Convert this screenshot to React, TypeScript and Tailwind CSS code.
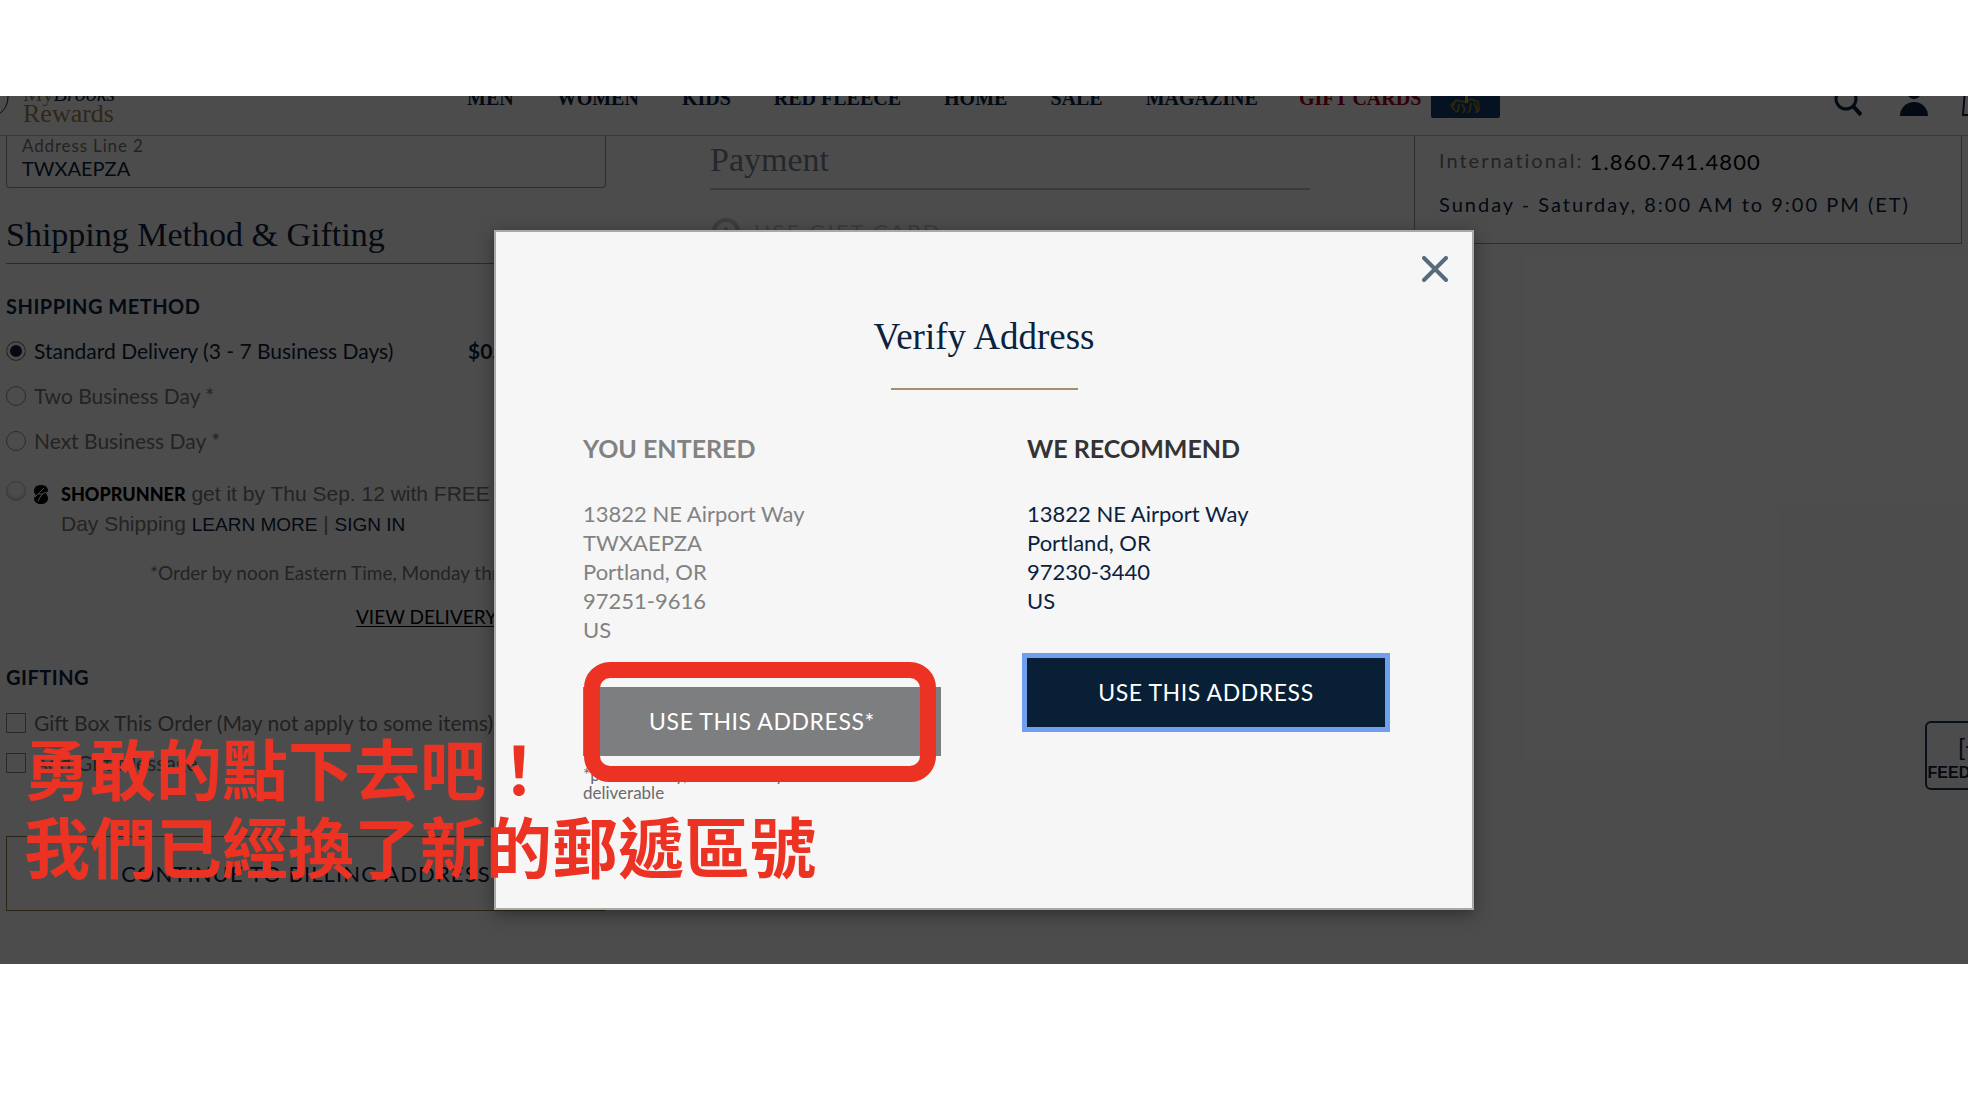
import { FC, ReactNode } from 'react';

const NAV_LINKS = ['MEN', 'WOMEN', 'KIDS', 'RED FLEECE', 'HOME', 'SALE', 'MAGAZINE'];

const Header: FC = () => (
  <header className="flex h-10 items-end justify-between overflow-hidden border-b border-[#c0c0c0] font-['Liberation_Serif',serif]">
    <div className="flex w-[467px] shrink-0 items-end">
      <svg className="h-10 w-[23px]" viewBox="0 0 23 40" fill="none">
        <circle cx="-13" cy="2" r="21" stroke="#0a2240" strokeWidth="1" />
      </svg>
      <a href="#rewards" className="pb-[11px] text-[26px] leading-5 text-[#a08350]">
        <span className="block h-5 text-[22px]">
          My<i className="text-[#0a2240]">Brooks</i>
        </span>
        Rewards
      </a>
    </div>
    <nav className="flex flex-1 items-end gap-[43px] text-xl leading-6 font-bold text-[#0a2240]">
      {NAV_LINKS.map((label) => (
        <a key={label} href="#nav" className="pb-[25px] whitespace-nowrap">
          {label}
        </a>
      ))}
      <a href="#gift-cards" className="-ml-0.5 flex items-end gap-2.5 whitespace-nowrap text-[#a00018]">
        <span className="pb-[25px]">GIFT CARDS</span>
        <svg className="mb-4 h-6 w-[69px]" viewBox="0 0 69 24">
          <path d="M0 0h69v21a2 2 0 0 1-2 2H2a2 2 0 0 1-2-2z" fill="#0f3d6e" />
          <path
            d="M20 11l5-6 9 2 6-3 7 3 1 8-3 3M24 8l-3 4 3 3M28 9l-1 7-3 1M31 9l3 5-2 4M40 8l-1 7-2 3M43 8l3 6-1 4"
            stroke="#8c7a35"
            strokeWidth="2"
            fill="none"
          />
          <path d="M34 0h3v8h-3z" fill="#d8a72b" />
        </svg>
      </a>
    </nav>
    <div className="flex w-[134px] shrink-0 items-end gap-[38px] overflow-hidden pb-[19px]">
      <button aria-label="Search" className="shrink-0">
        <svg className="h-7 w-7" viewBox="0 0 28 28" fill="none" stroke="#0a2240" strokeWidth="3">
          <circle cx="12" cy="11" r="10" />
          <path d="M19 18l8 9" strokeWidth="4" />
        </svg>
      </button>
      <button aria-label="Account" className="shrink-0">
        <svg className="h-7 w-7" viewBox="0 0 28 28" fill="#0a2240">
          <circle cx="14" cy="4" r="7" />
          <path d="M0 28a14 14 0 0 1 28 0z" />
        </svg>
      </button>
      <button aria-label="Shopping bag" className="-ml-1 shrink-0">
        <svg className="h-7 w-6" viewBox="0 0 24 28" fill="none" stroke="#0a2240" strokeWidth="2">
          <path d="M3 2L1 27h22L21 2z" />
        </svg>
      </button>
    </div>
  </header>
);

interface DeliveryOptionProps {
  label: string;
  price?: string;
  checked?: boolean;
}

const DeliveryOption: FC<DeliveryOptionProps> = ({ label, price, checked = false }) => (
  <div className="flex h-[45px] items-center justify-between text-[21px]">
    <label className={`flex items-center gap-2 ${checked ? 'text-[#0a2240]' : 'text-[#777777]'}`}>
      <input
        type="radio"
        name="delivery"
        defaultChecked={checked}
        className="h-5 w-5 appearance-none rounded-full border border-[#909090] bg-transparent checked:border-[#b39b70] checked:bg-[#0a2240] checked:shadow-[inset_0_0_0_3px_#ffffff]"
      />
      {label}
    </label>
    {price && <b className="w-[138px] text-[#0a2240]">{price}</b>}
  </div>
);

const GiftOption: FC<{ label: string }> = ({ label }) => (
  <label className="flex h-10 items-center gap-2 text-[21px] text-[#707070]">
    <input type="checkbox" className="h-5 w-5 appearance-none border border-[#888888]" />
    {label}
  </label>
);

const ShippingColumn: FC = () => (
  <section className="w-[600px] shrink-0">
    <div className="flex h-[52px] flex-col justify-end rounded-b border border-t-0 border-[#999999] px-[15px] pb-[7px]">
      <label htmlFor="address2" className="text-[17px] leading-5 tracking-wider text-[#777777]">
        Address Line 2
      </label>
      <input id="address2" readOnly value="TWXAEPZA" className="h-6 bg-transparent text-xl text-[#0a2240] outline-none" />
    </div>
    <h2 className="mt-[27px] border-b border-[#a98a55] pb-2 font-['Liberation_Serif',serif] text-[34px] leading-10 text-[#0a2240]">
      Shipping Method &amp; Gifting
    </h2>
    <h3 className="mt-[30px] mb-2.5 text-xl leading-6 font-bold tracking-wide text-[#0a2240]">SHIPPING METHOD</h3>
    <DeliveryOption label="Standard Delivery (3 - 7 Business Days)" price="$0.00" checked />
    <DeliveryOption label="Two Business Day *" />
    <DeliveryOption label="Next Business Day *" />
    <div className="mt-4 flex gap-2 font-['Liberation_Sans',sans-serif] text-[21px] leading-[29px] text-[#777777]">
      <input
        type="radio"
        name="delivery"
        aria-label="ShopRunner"
        className="mt-0.5 h-5 w-5 appearance-none rounded-full border border-[#bbbbbb] shadow-[inset_0_-2px_3px_#cccccc]"
      />
      <svg className="mt-1.5 h-[19px] w-[14px]" viewBox="0 0 14 19">
        <path d="M7 0c4 0 7 2 7 6l-2 3c1 1 2 2 2 4 0 4-3 6-7 6s-7-2-7-6l2-3C1 9 0 8 0 6c0-4 3-6 7-6z" fill="#000000" />
        <path d="M10 3L4 9h4l-4 7M4 9l-3 3M8 9l5-2" stroke="#ffffff" fill="none" />
      </svg>
      <p className="ml-[5px] whitespace-nowrap">
        <b className="font-[Lato,sans-serif] text-lg leading-[29px] font-black text-black">SHOPRUNNER</b> get it by Thu Sep. 12 with FREE 2-
        <br />
        Day Shipping{' '}
        <a href="#learn" className="text-[19px] text-[#0a2240]">
          LEARN MORE
        </a>{' '}
        |{' '}
        <a href="#signin" className="text-[19px] text-[#0a2240]">
          SIGN IN
        </a>
      </p>
    </div>
    <p className="mt-[22px] ml-36 text-[19px] leading-6 whitespace-nowrap text-[#777777]">*Order by noon Eastern Time, Monday through Friday</p>
    <a href="#delivery" className="mt-5 ml-[350px] block text-[19px] leading-6 text-black underline underline-offset-2">
      VIEW DELIVERY DETAILS
    </a>
    <h3 className="mt-9 mb-3.5 text-xl leading-6 font-bold tracking-wide text-[#0a2240]">GIFTING</h3>
    <GiftOption label="Gift Box This Order (May not apply to some items)" />
    <GiftOption label="Add Gift Message" />
    <button className="mt-[53px] h-[75px] w-full border border-[#8f7846] text-[22px] tracking-wider text-[#0a2240]">
      CONTINUE TO BILLING ADDRESS
    </button>
  </section>
);

const PaymentColumn: FC = () => (
  <section className="w-[600px] shrink-0">
    <h2 className="border-b-2 border-[#c4c2ae] pt-1 pb-2 font-['Liberation_Serif',serif] text-[34px] leading-10 text-[#7a8794]">
      Payment
    </h2>
    <button className="mt-7 ml-0.5 flex items-center gap-3.5 text-[22px] leading-7 tracking-widest text-[#cccccc]">
      <svg className="h-7 w-7" viewBox="0 0 28 28" fill="none" stroke="#cccccc" strokeWidth="4">
        <circle cx="14" cy="14" r="12" />
        <path d="M14 9v10M9 14h10" stroke="#bbbbbb" strokeWidth="3" />
      </svg>
      USE GIFT CARD
    </button>
  </section>
);

const ContactBox: FC = () => (
  <aside className="mr-1.5 h-[108px] flex-1 border border-t-0 border-[#999999] pt-2 pl-6 whitespace-nowrap">
    <p className="flex items-start gap-1.5 text-xl leading-8 tracking-widest text-[#777777]">
      International:
      <a href="#call" className="pt-0.5 text-[22px] tracking-wider text-black">
        1.860.741.4800
      </a>
    </p>
    <p className="mt-3 text-xl leading-7 tracking-widest text-[#0a2240]">Sunday - Saturday, 8:00 AM to 9:00 PM (ET)</p>
  </aside>
);

interface AddressCardProps {
  title: string;
  lines: string[];
  className: string;
  children: ReactNode;
}

const AddressCard: FC<AddressCardProps> = ({ title, lines, className, children }) => (
  <section className="flex-1">
    <h3 className={`mb-[35px] text-[25px] leading-8 font-bold ${className}`}>{title}</h3>
    <address className="mb-[43px] text-[22px] leading-[29px] not-italic">
      {lines.map((line) => (
        <span key={line} className="block">
          {line}
        </span>
      ))}
    </address>
    {children}
  </section>
);

const VerifyDialog: FC = () => (
  <div
    role="dialog"
    aria-label="Verify Address"
    className="relative h-[680px] w-[980px] border-2 border-[#a8a8a8] bg-[#f6f6f6] px-[87px] pt-[81px] shadow-[0_4px_16px_rgba(0,0,0,0.4)]"
  >
    <button aria-label="Close" className="absolute top-6 right-6">
      <svg className="h-[26px] w-[26px]" viewBox="0 0 26 26" stroke="#586b7d" strokeWidth="4" strokeLinecap="round">
        <path d="M2 2l22 22M24 2L2 24" />
      </svg>
    </button>
    <h2 className="text-center font-['Liberation_Serif',serif] text-[37px] leading-12 text-[#0a2240]">Verify Address</h2>
    <hr className="mx-auto mt-[27px] mb-[42px] w-[187px] border-t-2 border-[#a38f6e]" />
    <div className="flex gap-[86px]">
      <div className="flex flex-1 text-[#828282]">
        <AddressCard
          title="YOU ENTERED"
          lines={['13822 NE Airport Way', 'TWXAEPZA', 'Portland, OR', '97251-9616', 'US']}
          className="text-[#828282]"
        >
          <button className="h-[69px] w-full bg-[#7d7e7f] text-[23px] tracking-wide text-white">USE THIS ADDRESS*</button>
          <p className="mt-2.5 text-[17px] leading-[18px] text-[#6b6b6b]">
            *please verify, address may not be
            <br />
            deliverable
          </p>
        </AddressCard>
      </div>
      <div className="flex flex-1 text-[#0a2240]">
        <AddressCard
          title="WE RECOMMEND"
          lines={['13822 NE Airport Way', 'Portland, OR', '97230-3440', 'US']}
          className="text-[#333333]"
        >
          <button className="h-[69px] w-full bg-[#081f36] text-[23px] tracking-wide text-white ring-5 ring-[#709ff0]">
            USE THIS ADDRESS
          </button>
        </AddressCard>
      </div>
    </div>
  </div>
);

export default function App() {
  return (
    <main className="overflow-hidden bg-white pt-24 pb-[136px] font-[Lato,sans-serif]">
      <div className="relative overflow-hidden bg-white pb-[53px]">
        <Header />
        <div className="flex gap-[104px] pl-1.5">
          <ShippingColumn />
          <PaymentColumn />
          <ContactBox />
        </div>
        <button className="absolute top-[625px] -right-[51px] flex h-[69px] w-[94px] flex-col items-center justify-end gap-1 rounded-md border-2 border-[#1a3354] pb-[5px] font-['Liberation_Sans',sans-serif] text-base leading-5 font-bold whitespace-nowrap text-[#0a2240]">
          <span className="text-2xl leading-6 font-normal">[+]</span>
          FEEDBACK
        </button>
        <div className="absolute inset-0 flex items-start justify-center bg-black/70 pt-[134px]">
          <VerifyDialog />
        </div>
        <div className="absolute top-[566px] left-[584px] h-30 w-[352px] rounded-[26px] border-16 border-[#ec3323]" />
        <p className="absolute top-[631px] left-6 font-['Noto_Sans_CJK_TC',sans-serif] text-[66px] leading-[78px] font-bold whitespace-nowrap text-[#ec3323]">
          勇敢的點下去吧！
          <br />
          我們已經換了新的郵遞區號
        </p>
      </div>
    </main>
  );
}
